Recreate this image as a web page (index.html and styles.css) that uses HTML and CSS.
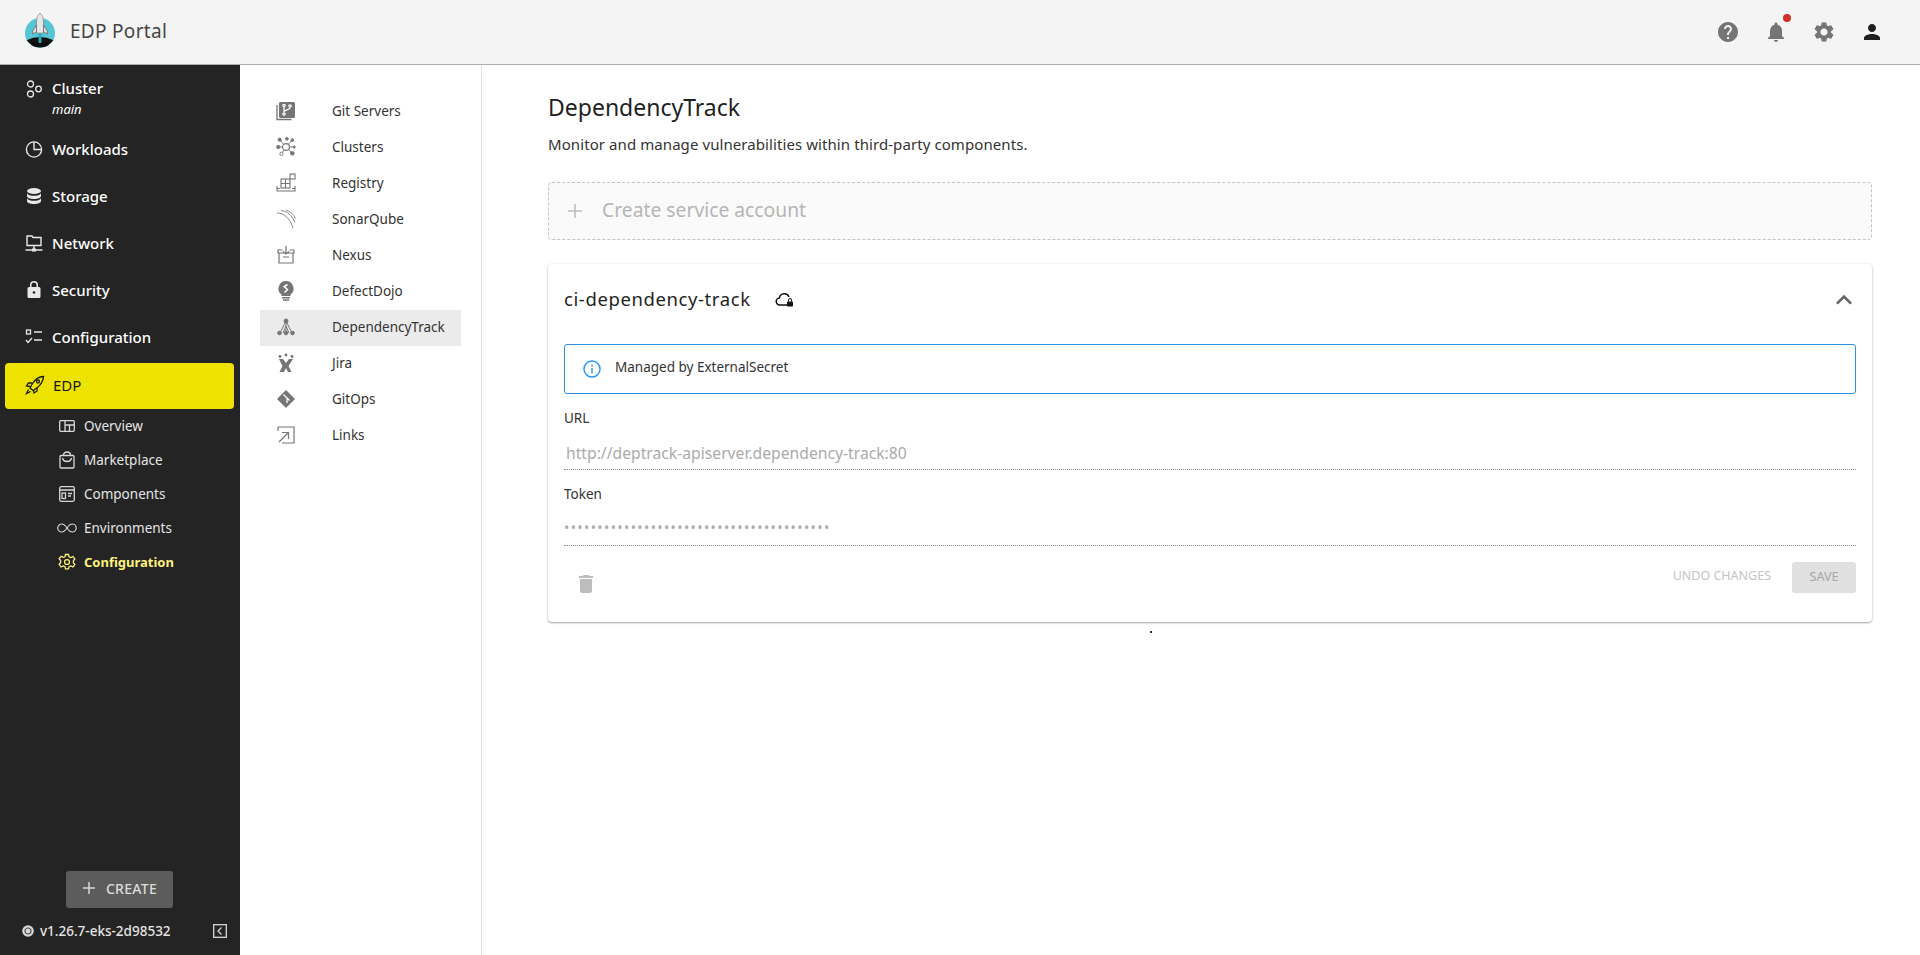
FILE: index.html
```html
<!DOCTYPE html>
<html lang="en">
<head>
  <meta charset="UTF-8">
  <title>EDP Portal</title>
  <link rel="stylesheet" href="styles.css">
</head>
<body>

  <!-- Top bar -->
  <header class="topbar">
    <svg class="logo" width="32" height="38" viewBox="0 0 32 38">
      <circle cx="16" cy="21" r="15" fill="#56c5d6"/>
      <path d="M3 28h26a15 15 0 0 1-26 0z" fill="#0c0c0c"/>
      <path d="M3 28q6-3 13-3t13 3l-1 2H4z" fill="#111"/>
      <rect x="14.5" y="22" width="3" height="9" fill="#2aa3bb"/>
      <path d="M16 1q3.5 3 3.5 8v12h-7V9q0-5 3.500-8z" fill="#e6e6e6" stroke="#777" stroke-width=".6"/>
      <path d="M12.500 13l-4 6v3l4-2zM19.500 13l4 6v3l-4-2z" fill="#d8d8d8" stroke="#555" stroke-width=".6"/>
    </svg>
    <span class="brand">EDP Portal</span>
    <div class="top-actions">
      <svg width="24" height="24" viewBox="0 0 24 24" fill="#757575"><path d="M12 2C6.480 2 2 6.480 2 12s4.480 10 10 10 10-4.480 10-10S17.520 2 12 2zm1 17h-2v-2h2v2zm2.070-7.750-.9.920C13.450 12.900 13 13.500 13 15h-2v-.5c0-1.100.450-2.100 1.170-2.830l1.240-1.260c.37-.36.590-.86.590-1.410 0-1.100-.9-2-2-2s-2 .9-2 2H8c0-2.210 1.790-4 4-4s4 1.790 4 4c0 .88-.36 1.680-.93 2.250z"/></svg>
      <span class="bell">
        <svg width="24" height="24" viewBox="0 0 24 24" fill="#757575"><path d="M12 22c1.100 0 2-.9 2-2h-4c0 1.100.89 2 2 2zm6-6v-5c0-3.070-1.640-5.640-4.500-6.320V4c0-.83-.67-1.500-1.500-1.500s-1.500.67-1.500 1.500v.68C7.630 5.360 6 7.920 6 11v5l-2 2v1h16v-1l-2-2z"/></svg>
        <i class="bell-dot"></i>
      </span>
      <svg width="24" height="24" viewBox="0 0 24 24" fill="#757575"><path d="M19.140 12.940c.04-.3.060-.61.060-.94 0-.32-.02-.64-.07-.94l2.030-1.580a.49.490 0 0 0 .12-.61l-1.920-3.320a.488.488 0 0 0-.59-.22l-2.390.96c-.5-.38-1.030-.7-1.620-.94l-.36-2.540a.484.484 0 0 0-.48-.41h-3.840c-.24 0-.43.170-.47.410l-.36 2.540c-.59.240-1.130.570-1.620.94l-2.390-.96c-.22-.08-.47 0-.59.220L2.740 8.870c-.12.210-.08.470.12.610l2.030 1.580c-.05.3-.09.630-.09.940s.02.640.07.940l-2.030 1.580a.49.490 0 0 0-.12.610l1.920 3.320c.12.220.37.290.59.220l2.390-.96c.5.380 1.030.7 1.620.94l.36 2.540c.05.240.24.410.48.410h3.840c.24 0 .44-.17.470-.41l.36-2.540c.59-.24 1.130-.56 1.620-.94l2.390.96c.22.080.47 0 .59-.22l1.920-3.320c.12-.22.070-.47-.12-.61l-2.010-1.580zM12 15.600c-1.980 0-3.600-1.620-3.600-3.600s1.620-3.600 3.600-3.600 3.600 1.620 3.600 3.600-1.620 3.600-3.600 3.600z"/></svg>
      <svg width="24" height="24" viewBox="0 0 24 24" fill="#1f1f1f"><path d="M12 12c2.210 0 4-1.790 4-4s-1.790-4-4-4-4 1.790-4 4 1.790 4 4 4zm0 2c-2.670 0-8 1.340-8 4v2h16v-2c0-2.660-5.330-4-8-4z"/></svg>
    </div>
  </header>

  <div class="shell">

    <!-- Main sidebar -->
    <aside class="sidebar">
      <nav class="side-nav">
        <a class="side-item side-item-cluster">
          <svg class="side-icon" width="18" height="18" viewBox="0 0 18 18" fill="none" stroke="#e8e8e8" stroke-width="1.300"><circle cx="5.500" cy="4" r="3"/><circle cx="5.500" cy="14" r="3"/><circle cx="13.500" cy="9" r="2.800"/></svg>
          <span class="side-text">Cluster<em class="side-sub">main</em></span>
        </a>
        <a class="side-item">
          <svg class="side-icon" width="18" height="18" viewBox="0 0 18 18" fill="none" stroke="#e8e8e8" stroke-width="1.400"><circle cx="9" cy="9.500" r="7.600"/><path d="M9 2v7.500h7" /></svg>
          <span class="side-text">Workloads</span>
        </a>
        <a class="side-item">
          <svg class="side-icon" width="18" height="18" viewBox="0 0 18 18" fill="#e8e8e8"><ellipse cx="9" cy="4" rx="7" ry="3"/><path d="M2 6.200c1 1.800 4 2.600 7 2.600s6-.8 7-2.600V9c0 1.700-3 3-7 3S2 10.700 2 9z"/><path d="M2 11.200c1 1.800 4 2.600 7 2.600s6-.8 7-2.600V14c0 1.700-3 3-7 3s-7-1.300-7-3z"/></svg>
          <span class="side-text">Storage</span>
        </a>
        <a class="side-item">
          <svg class="side-icon" width="18" height="18" viewBox="0 0 18 18" fill="none" stroke="#e8e8e8" stroke-width="1.400"><path d="M2 11.500V2h5l1 1.500h8v8zM.5 16h17M9 11.500V16"/><rect x="7" y="14.500" width="4" height="3" fill="#e8e8e8" stroke="none"/></svg>
          <span class="side-text">Network</span>
        </a>
        <a class="side-item">
          <svg class="side-icon" width="18" height="18" viewBox="0 0 18 18" fill="#e8e8e8"><path d="M14 6h-1V4a4 4 0 0 0-8 0v2H4a1.500 1.500 0 0 0-1.500 1.500v8A1.500 1.500 0 0 0 4 17h10a1.500 1.500 0 0 0 1.500-1.500v-8A1.500 1.500 0 0 0 14 6zM6.500 4a2.500 2.500 0 0 1 5 0v2h-5z"/><circle cx="9" cy="11.500" r="1.300" fill="#242424"/></svg>
          <span class="side-text">Security</span>
        </a>
        <a class="side-item">
          <svg class="side-icon" width="18" height="18" viewBox="0 0 18 18" fill="none" stroke="#e8e8e8" stroke-width="1.300"><rect x="1.500" y="2" width="4" height="4"/><path d="M9 4h8M9 12h8M1 12l2 2.500L7 10"/></svg>
          <span class="side-text">Configuration</span>
        </a>
        <a class="side-item side-item-active">
          <svg class="side-icon" width="20" height="20" viewBox="0 0 20 20" fill="none" stroke="#1a1a1a" stroke-width="1.300"><path d="M18.500 1.500c-5 .3-8.500 3-11 7L5 13l3 2.500 4.500-3c3.500-3 5.700-6.500 6-11z"/><path d="M7 8H3.500L1.500 11l3.500.5M12 12.500V16l-3 2-.5-3"/><circle cx="13" cy="6.500" r="1.500"/><path d="M3.500 14.500 1.500 18.500l4-2"/></svg>
          <span class="side-text">EDP</span>
        </a>
      </nav>

      <nav class="sub-nav">
        <a class="sub-item">
          <svg width="16" height="14" viewBox="0 0 16 14" fill="none" stroke="#d8d8d8" stroke-width="1.300"><rect x=".7" y="1.700" width="14.600" height="10.600" rx="1"/><path d="M6 2v10M6 6h9.500M10.500 6v6" /></svg>
          <span>Overview</span>
        </a>
        <a class="sub-item">
          <svg width="16" height="18" viewBox="0 0 16 18" fill="none" stroke="#d8d8d8" stroke-width="1.300"><rect x="1" y="4.500" width="14" height="12.500" rx="1"/><path d="M4.500 4.500C4.500 2 6 1 8 1s3.500 1 3.500 3.500M3.500 7c.5 2.500 2.500 3.500 4.500 3.500s4-1 4.500-3.500"/></svg>
          <span>Marketplace</span>
        </a>
        <a class="sub-item">
          <svg width="16" height="16" viewBox="0 0 16 16" fill="none" stroke="#d8d8d8" stroke-width="1.300"><rect x=".7" y=".7" width="14.600" height="14.600" rx="1.500"/><path d="M1 4h14M9 7.500h4M9 10h3"/><rect x="3" y="7" width="3.500" height="5.500"/></svg>
          <span>Components</span>
        </a>
        <a class="sub-item">
          <svg width="20" height="10" viewBox="0 0 20 10" fill="none" stroke="#d8d8d8" stroke-width="1.200"><path d="M10 5C8 2 6.500 1 4.800 1a4 4 0 0 0 0 8C6.500 9 8 8 10 5c2-3 3.500-4 5.200-4a4 4 0 0 1 0 8C13.500 9 12 8 10 5z"/></svg>
          <span>Environments</span>
        </a>
        <a class="sub-item sub-item-active">
          <svg width="18" height="18" viewBox="0 0 24 24" fill="none" stroke="#fff27a" stroke-width="1.700"><circle cx="12" cy="12" r="3.300"/><path d="M10 2h4l.7 3 2.500 1.100 2.700-1.500 2.600 3.400-2 2.300v2.700l2 2.300-2.600 3.400-2.700-1.500-2.500 1.100-.7 3h-4l-.7-3-2.500-1.100-2.700 1.500L1.500 15l2-2.300V10l-2-2.300 2.600-3.400 2.700 1.500L9.300 5z"/></svg>
          <span>Configuration</span>
        </a>
      </nav>

      <div class="side-footer">
        <button class="create-btn" type="button">
          <svg width="14" height="14" viewBox="0 0 14 14" stroke="#d8d8d8" stroke-width="1.500"><path d="M7 1v12M1 7h12"/></svg>
          <span>CREATE</span>
        </button>
        <div class="version-row">
          <svg width="12" height="12" viewBox="0 0 12 12"><circle cx="6" cy="6" r="5.800" fill="#d8d8d8"/><circle cx="6" cy="6" r="3" fill="none" stroke="#555" stroke-width="1.200"/></svg>
          <span class="version-text">v1.26.7-eks-2d98532</span>
          <svg class="collapse" width="14" height="14" viewBox="0 0 14 14" fill="none" stroke="#d8d8d8" stroke-width="1.300"><rect x=".7" y=".7" width="12.600" height="12.600"/><path d="M8.500 3.500 5 7l3.500 3.500"/></svg>
        </div>
      </div>
    </aside>

    <!-- Configuration menu -->
    <nav class="config-menu">
      <a class="config-item">
        <svg width="20" height="20" viewBox="0 0 20 20" fill="#757575"><path d="M4.500 1h13A1.500 1.500 0 0 1 19 2.500v13a1.500 1.500 0 0 1-1.500 1.500h-13A1.500 1.500 0 0 1 3 15.500v-13A1.500 1.500 0 0 1 4.500 1z"/><path d="M1 4v14.500h14.500" fill="none" stroke="#757575" stroke-width="1.300"/><g fill="none" stroke="#fff" stroke-width="1.200"><circle cx="8" cy="4.500" r="1.200"/><circle cx="8" cy="13" r="1.200"/><circle cx="14" cy="5" r="1.200"/><path d="M8 6v5.500M14 6.500c0 2.500-5 2-6 4"/></g></svg>
        <span>Git Servers</span>
      </a>
      <a class="config-item">
        <svg width="22" height="22" viewBox="0 0 22 22" fill="#757575" stroke="#757575"><g stroke-width="1"><path d="M11 11 4 3M11 11l7-8M11 11H1M11 11h10M11 11l-5 7M11 11l7 7"/><circle cx="4" cy="3" r="1.800"/><circle cx="12" cy="2" r="1.500"/><circle cx="18" cy="3.500" r="1.500"/><circle cx="2.500" cy="11" r="1.800"/><circle cx="20" cy="11" r="1.200"/><circle cx="6" cy="18.500" r="1.800" fill="#fff"/><circle cx="18" cy="18" r="2"/></g><circle cx="11" cy="11" r="3.800" fill="#fff" stroke-width="1.300"/></svg>
        <span>Clusters</span>
      </a>
      <a class="config-item">
        <svg width="20" height="20" viewBox="0 0 20 20" fill="none" stroke="#757575" stroke-width="1.100"><path d="M1 13v5h18v-5M1 15.500h3M16 15.500h3"/><rect x="5" y="6" width="9" height="9"/><path d="M9.500 6v9M5 10.500h9"/><rect x="14" y="1" width="5" height="5"/></svg>
        <span>Registry</span>
      </a>
      <a class="config-item">
        <svg width="20" height="20" viewBox="0 0 20 20" fill="none" stroke="#8a8a8a" stroke-width="1"><path d="M1 4c7 0 13 5 16 15"/><path d="M5 1.500c6 .5 11 5 14 12"/><path d="M10 1c4 1.500 8 4.500 9.500 8.500"/></svg>
        <span>SonarQube</span>
      </a>
      <a class="config-item">
        <svg width="20" height="20" viewBox="0 0 20 20" fill="none" stroke="#757575" stroke-width="1.200"><path d="M10 1v8M7 6.500 10 9l3-2.500M6.500 5H2v3h16V5h-4.500M3 8v10h14V8M7 12h6"/></svg>
        <span>Nexus</span>
      </a>
      <a class="config-item">
        <svg width="20" height="20" viewBox="0 0 20 20" fill="#757575"><path d="M10 0a7.500 7.500 0 0 0-4.500 13.500V15h9v-1.500A7.500 7.500 0 0 0 10 0z"/><path d="M11.500 3.500 8.200 5.500l3.300 3-3 3" fill="none" stroke="#fff" stroke-width="1.500"/><rect x="6" y="16" width="8" height="1.500"/><rect x="7" y="18.300" width="6" height="1.500"/></svg>
        <span>DefectDojo</span>
      </a>
      <a class="config-item config-item-active">
        <svg width="18" height="18" viewBox="0 0 18 18" fill="#757575" stroke="#757575" stroke-width="1"><path d="M9 3 3 15M9 3l6 12M9 8 6 15M9 8l3 7M9 3v12" fill="none"/><circle cx="9" cy="3" r="2"/><circle cx="2.500" cy="15" r="1.800"/><circle cx="9" cy="15" r="1.800"/><circle cx="15.500" cy="15" r="1.800"/></svg>
        <span>DependencyTrack</span>
      </a>
      <a class="config-item">
        <svg width="20" height="20" viewBox="0 0 20 20" fill="#757575"><circle cx="4" cy="3.500" r="1.400"/><circle cx="10" cy="2" r="1.400"/><circle cx="16" cy="3.500" r="1.400"/><path d="M3 6h4l3 4 3-4h4l-4.500 7 3 6h-3.500l-2-4-2 4H3.500l3-6z"/></svg>
        <span>Jira</span>
      </a>
      <a class="config-item">
        <svg width="20" height="20" viewBox="0 0 20 20"><path d="M10 1 19 10l-9 9-9-9z" fill="#757575"/><path d="M7.500 5.500 11 9v5M11 9l2.500 2.500" fill="none" stroke="#fff" stroke-width="1.300"/></svg>
        <span>GitOps</span>
      </a>
      <a class="config-item">
        <svg width="20" height="20" viewBox="0 0 20 20" fill="none" stroke="#757575" stroke-width="1.200"><path d="M2 2h16v16H6M2 6V2M3 17 12 8M6 7.500h6.500V14"/></svg>
        <span>Links</span>
      </a>
    </nav>

    <!-- Page content -->
    <main class="content">
      <h1 class="page-title">DependencyTrack</h1>
      <p class="page-desc">Monitor and manage vulnerabilities within third-party components.</p>

      <div class="create-box">
        <svg width="16" height="16" viewBox="0 0 16 16" stroke="#bdbdbd" stroke-width="1.500"><path d="M8 1v14M1 8h14"/></svg>
        <span>Create service account</span>
      </div>

      <section class="card">
        <div class="card-head">
          <span class="card-title">ci-dependency-track</span>
          <svg class="cloud" width="20" height="20" viewBox="0 0 20 20"><path d="M12 15H5a3.500 3.500 0 0 1-.6-7A5 5 0 0 1 14 7" fill="none" stroke="#111" stroke-width="1.500"/><rect x="12" y="11.500" width="6" height="5" rx=".7" fill="#111"/><path d="M13.500 11.500V10a1.500 1.500 0 0 1 3 0v1.500" fill="none" stroke="#111"/></svg>
          <svg class="chevron" width="32" height="32" viewBox="0 0 24 24" fill="#666"><path d="M12 8l-6 6 1.410 1.410L12 10.830l4.590 4.580L18 14z"/></svg>
        </div>

        <div class="alert">
          <svg width="18" height="18" viewBox="0 0 18 18" fill="none" stroke="#2196f3" stroke-width="1.400"><circle cx="9" cy="9" r="8"/><path d="M9 8v5.500M9 4.800v1.600"/></svg>
          <span>Managed by ExternalSecret</span>
        </div>

        <div class="field">
          <label class="field-label">URL</label>
          <div class="field-value field-url">http://deptrack-apiserver.dependency-track:80</div>
        </div>
        <div class="field">
          <label class="field-label">Token</label>
          <div class="field-value field-token">••••••••••••••••••••••••••••••••••••••••</div>
        </div>

        <div class="card-actions">
          <svg class="trash" width="24" height="24" viewBox="0 0 24 24" fill="#bdbdbd"><path d="M6 19c0 1.100.9 2 2 2h8c1.100 0 2-.9 2-2V7H6v12zM19 4h-3.500l-1-1h-5l-1 1H5v2h14V4z"/></svg>
          <span class="undo">UNDO CHANGES</span>
          <button class="save" type="button">SAVE</button>
        </div>
      </section>
      <i class="stray-dot"></i>
    </main>
  </div>
</body>
</html>
```

FILE: styles.css
```css
* {
  box-sizing: border-box;
}

body {
  margin: 0;
  height: 955px;
  overflow: hidden;
  font-family: "Noto Sans", sans-serif;
  color: #1f1f1f;
  background-color: #fff;
}

svg {
  flex: none;
}

/* Top bar */
.topbar {
  height: 65px;
  display: flex;
  align-items: center;
  padding-left: 24px;
  background-color: #f4f4f4;
  border-bottom: 1px solid #adadad;
}

.logo {
  margin-bottom: 2px;
}

.brand {
  margin-left: 14px;
  padding-bottom: 2px;
  font-size: 19px;
  letter-spacing: 0.3px;
  color: #454545;
}

.top-actions {
  margin-left: auto;
  margin-right: 36px;
  display: flex;
  align-items: center;
  gap: 24px;
}

.bell {
  position: relative;
  display: flex;
}

.bell-dot {
  position: absolute;
  top: -6px;
  right: -3px;
  width: 8px;
  height: 8px;
  border-radius: 50%;
  background-color: #d32f2f;
}

.shell {
  display: flex;
  height: 890px;
}

/* Main sidebar */
.sidebar {
  width: 240px;
  display: flex;
  flex-direction: column;
  padding: 0 6px 0 5px;
  background-color: #242424;
  color: #fff;
}

.side-nav {
  display: flex;
  flex-direction: column;
}

.side-item {
  height: 47px;
  display: flex;
  align-items: center;
  gap: 9px;
  padding: 0 0 2px 20px;
  font-size: 15px;
  font-weight: 500;
}

.side-item-cluster {
  height: 61px;
  align-items: flex-start;
  padding: 13px 0 0 20px;
}

.side-item-cluster svg {
  margin-top: 2px;
}

.side-text {
  display: flex;
  flex-direction: column;
  line-height: 20px;
}

.side-sub {
  font-size: 13px;
  font-weight: 400;
  line-height: 22px;
}

.side-item-active {
  height: 46px;
  margin-top: 2px;
  gap: 8px;
  padding-bottom: 3px;
  color: #1a1a1a;
  font-weight: 400;
  background-color: #ede200;
  border-radius: 4px;
}

.sub-nav {
  display: flex;
  flex-direction: column;
}

.sub-item {
  height: 34px;
  display: flex;
  align-items: center;
  padding-left: 52px;
  font-size: 13.5px;
  color: #e4e4e4;
}

.sub-item svg {
  width: 20px;
  margin-right: 7px;
}

.sub-item-active {
  font-size: 13px;
  font-weight: 700;
  color: #fff27a;
}

.side-footer {
  margin-top: auto;
  display: flex;
  flex-direction: column;
  align-items: center;
  padding-bottom: 15px;
}

.create-btn {
  width: 107px;
  height: 37px;
  display: flex;
  align-items: center;
  justify-content: center;
  gap: 10px;
  padding: 0 0 3px;
  border: none;
  border-radius: 3px;
  font-family: inherit;
  font-size: 14px;
  font-weight: 500;
  letter-spacing: 0.3px;
  color: #dcdcdc;
  background-color: #5c5c5c;
}

.version-row {
  width: 100%;
  margin-top: 14px;
  display: flex;
  align-items: center;
  padding-left: 17px;
  font-size: 13.5px;
  font-weight: 500;
  color: #e4e4e4;
}

.version-text {
  margin-left: 6px;
}

.collapse {
  margin-left: auto;
  margin-right: 7px;
}

/* Configuration menu */
.config-menu {
  width: 242px;
  padding: 29px 20px 0;
  border-right: 1px solid #e0e0e0;
}

.config-item {
  height: 36px;
  display: flex;
  align-items: center;
  padding: 0 0 2px 16px;
  font-size: 13.5px;
  color: #333;
}

.config-item svg {
  width: 20px;
  margin-right: 36px;
}

.config-item-active {
  background-color: #ebebeb;
}

/* Page content */
.content {
  flex: 1;
  padding: 26px 48px 0 66px;
  position: relative;
}

.page-title {
  margin: 0;
  font-size: 23px;
  font-weight: 400;
  line-height: 32px;
}

.page-desc {
  margin: 10px 0 0;
  font-size: 15px;
  letter-spacing: 0.08px;
  line-height: 22px;
  color: #333;
}

.create-box {
  height: 58px;
  margin-top: 27px;
  display: flex;
  align-items: center;
  gap: 19px;
  padding: 0 0 4px 18px;
  border: 1px dashed #c4c4c4;
  border-radius: 4px;
  font-size: 19.3px;
  color: #b5b5b5;
  background-color: #fafafa;
}

.create-box svg {
  margin-top: 4px;
}

.card {
  height: 358px;
  margin-top: 24px;
  padding: 0 16px;
  border-radius: 4px;
  background-color: #fff;
  box-shadow: 0 1px 2px rgba(0, 0, 0, 0.35), 0 0 3px rgba(0, 0, 0, 0.08);
}

.card-head {
  height: 80px;
  display: flex;
  align-items: center;
  padding-bottom: 12px;
}

.card-title {
  margin-right: 24px;
  font-size: 18.5px;
  letter-spacing: 0.6px;
}

.cloud {
  margin-top: 3px;
}

.chevron {
  margin: 3px -4px 0 auto;
}

.alert {
  height: 50px;
  display: flex;
  align-items: center;
  gap: 14px;
  padding: 0 0 5px 18px;
  border: 1px solid #2f8fe0;
  border-radius: 3px;
  font-size: 13.5px;
  color: #333;
}

.alert svg {
  margin-top: 5px;
}

.field {
  margin-top: 14px;
}

.field-label {
  display: block;
  font-size: 13.5px;
  line-height: 20px;
  color: #333;
}

.field-value {
  height: 42px;
  padding: 10px 0 0 2px;
  font-size: 15.7px;
  line-height: 30px;
  color: #ababab;
  border-bottom: 1px dotted #8a8a8a;
}

.field-token {
  padding: 9px 0 0;
  font-size: 14px;
  letter-spacing: 1.4px;
}

.card-actions {
  margin-top: 16px;
  display: flex;
  align-items: flex-start;
}

.trash {
  margin: 10px 0 0 10px;
}

.undo {
  margin: 5px 21px 0 auto;
  font-size: 12.5px;
  color: #c4c4c4;
}

.save {
  width: 64px;
  height: 31px;
  padding: 0 0 3px;
  border: none;
  border-radius: 3px;
  font-family: inherit;
  font-size: 12.5px;
  color: #a6a6a6;
  background-color: #e0e0e0;
}

.stray-dot {
  position: absolute;
  left: 668px;
  top: 566px;
  width: 2px;
  height: 2px;
  background-color: #333;
}
```
